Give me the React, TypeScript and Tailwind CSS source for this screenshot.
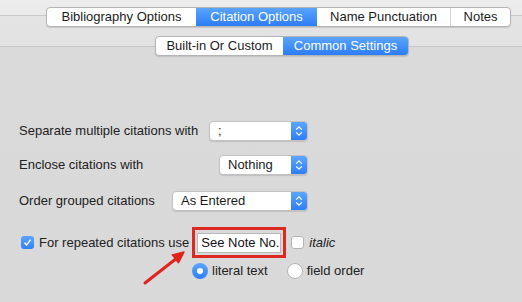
const seg1 = [
  { label: "Bibliography Options", w: "w-[149px]", on: false },
  { label: "Citation Options", w: "w-[121px]", on: true },
  { label: "Name Punctuation", w: "w-[133px]", on: false },
  { label: "Notes", w: "w-[60px]", on: false },
];

const seg2 = [
  { label: "Built-in Or Custom", w: "w-[127px]", on: false },
  { label: "Common Settings", w: "w-[125px]", on: true },
];

function Segmented({ items }: { items: { label: string; w: string; on: boolean }[] }) {
  return (
    <div className="flex h-[20px] rounded-[4px] border border-[#b4b4b4] bg-white overflow-hidden shadow-[0_1px_1px_rgba(0,0,0,0.12)]">
      {items.map((it, i) => (
        <div
          key={it.label}
          className={
            it.on
              ? "flex items-center justify-center bg-gradient-to-b from-[#5aa4fb] to-[#2c7cf5] text-white " + it.w
              : "flex items-center justify-center text-[#1c1c1c] " + it.w + (i > 0 && !items[i - 1].on ? " border-l border-[#d6d6d6]" : "")
          }
        >
          {it.label}
        </div>
      ))}
    </div>
  );
}

function Popup({ value, w }: { value: string; w: string }) {
  return (
    <div className={"flex h-[20px] rounded-[4px] border border-[#c2c2c2] bg-white shadow-[0_1px_1px_rgba(0,0,0,0.12)] overflow-hidden " + w}>
      <div className="flex-1 flex items-center pl-[8px] text-[#1c1c1c]">{value}</div>
      <div className="w-[16px] flex items-center justify-center bg-gradient-to-b from-[#5ba6fb] to-[#2e7ef5]">
        <svg width="8" height="12" viewBox="0 0 8 12" fill="none" stroke="white" strokeWidth="1.3">
          <path d="M1.2 4.6 4 1.8l2.8 2.8M1.2 7.4 4 10.2l2.8-2.8" />
        </svg>
      </div>
    </div>
  );
}

export default function App() {
  return (
    <div className="relative w-[522px] h-[302px] overflow-hidden font-['Liberation_Sans',Arial,sans-serif] text-[13px] text-[#222] bg-[linear-gradient(to_bottom,#ededed_0px,#eaeaea_15px,#c9c9c9_15px,#c9c9c9_16px,#e4e4e4_16px,#e2e2e2_46px,#c8c8c8_46px,#c8c8c8_47px,#dadada_47px,#d9d9d9_100%)]">
      <div className="flex justify-end pt-[7px] pr-[11px]">
        <Segmented items={seg1} />
      </div>
      <div className="flex pt-[9px] pl-[155px]">
        <Segmented items={seg2} />
      </div>

      <div className="flex flex-col pl-[19px] pt-[65px] w-[308px]">
        <div className="flex items-center justify-between h-[20px]">
          <span>Separate multiple citations with</span>
          <Popup value=";" w="w-[99px]" />
        </div>
        <div className="flex items-center justify-between h-[20px] mt-[14px]">
          <span>Enclose citations with</span>
          <Popup value="Nothing" w="w-[89px]" />
        </div>
        <div className="flex items-center justify-between h-[20px] mt-[16px]">
          <span>Order grouped citations</span>
          <Popup value="As Entered" w="w-[136px]" />
        </div>
      </div>

      <div className="flex items-center h-[31px] mt-[16px] pl-[21px]">
        <div className="w-[13px] h-[13px] rounded-[3px] bg-gradient-to-b from-[#5ba6fb] to-[#2f7ff5] flex items-center justify-center">
          <svg width="9" height="9" viewBox="0 0 9 9" fill="none" stroke="white" strokeWidth="1.4">
            <path d="M1.5 4.8 3.6 7 7.6 1.6" />
          </svg>
        </div>
        <span className="ml-[5px]">For repeated citations use</span>
        <div className="ml-[3px] w-[94px] h-[31px] border-[3px] border-[#dc2a22] p-[2px] flex items-center">
          <div className="w-full h-[20px] bg-white border border-[#b9b9b9] flex items-center pl-[3px] text-[#111]">See Note No.</div>
        </div>
        <div className="ml-[5px] w-[13px] h-[13px] rounded-[3px] bg-white border border-[#b4b4b4]" />
        <span className="ml-[5px] italic">italic</span>
      </div>

      <div className="flex items-center h-[16px] mt-[5px] pl-[192px]">
        <div className="w-[16px] h-[16px] rounded-full bg-gradient-to-b from-[#5ba6fb] to-[#2f7ff5] flex items-center justify-center">
          <div className="w-[6px] h-[6px] rounded-full bg-white" />
        </div>
        <span className="ml-[4px]">literal text</span>
        <div className="ml-[19px] w-[16px] h-[16px] rounded-full bg-white border border-[#b4b4b4]" />
        <span className="ml-[4px]">field order</span>
      </div>

      <svg className="absolute left-[140px] top-[248px]" width="50" height="40" viewBox="0 0 50 40">
        <path d="M5 35 37 10" stroke="#e0241d" strokeWidth="3" strokeLinecap="round" />
        <path d="M44 4 38.5 14.7 32.3 6.9Z" fill="#e0241d" stroke="#e0241d" strokeWidth="1.5" strokeLinejoin="round" />
      </svg>
    </div>
  );
}
